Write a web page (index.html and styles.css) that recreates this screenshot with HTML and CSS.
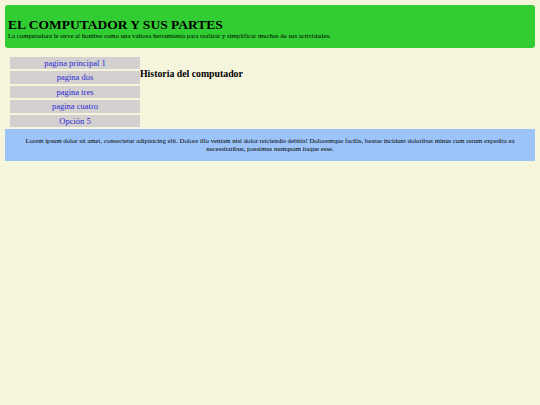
FILE: index.html
```html
<!DOCTYPE html>
<html lang="es">
<head>
<meta charset="utf-8">
<title>El computador y sus partes</title>
<link rel="stylesheet" href="styles.css">
</head>
<body>
<header class="header">
  <h1 class="title">EL COMPUTADOR Y SUS PARTES</h1>
  <p class="subtitle">La computadora le sirve al hombre como una valiosa herramienta para realizar y simplificar muchas de sus actividades.</p>
</header>
<div class="middle">
  <nav class="nav">
    <a class="nav-item" href="#">pagina principal 1</a>
    <a class="nav-item" href="#">pagina dos</a>
    <a class="nav-item" href="#">pagina tres</a>
    <a class="nav-item" href="#">pagina cuatro</a>
    <a class="nav-item" href="#">Opción 5</a>
  </nav>
  <h2 class="section-title">Historia del computador</h2>
</div>
<footer class="footer">
  <p class="footer-text">Lorem ipsum dolor sit amet, consectetur adipisicing elit. Dolore illo veniam nisi dolor reiciendis debitis! Doloremque facilis, beatae incidunt doloribus minus cum rerum expedita ea necessitatibus, possimus numquam itaque esse.</p>
</footer>
</body>
</html>
```
FILE: styles.css
```css
html, body {
  margin: 0;
  padding: 0;
}
body {
  background: #f5f5dc;
  padding: 5px;
  font-family: "Liberation Serif", "Times New Roman", serif;
  color: #000;
}
.header {
  background: #32cd32;
  border-radius: 3px;
  padding: 13px 3px 8px;
}
.title {
  margin: 0;
  font-size: 13.5px;
  line-height: 14px;
  font-weight: bold;
}
.subtitle {
  margin: 0;
  font-size: 6.75px;
  line-height: 8px;
}
.middle {
  display: flex;
  align-items: flex-start;
  margin-top: 9px;
}
.nav {
  display: flex;
  flex-direction: column;
  gap: 2px;
  width: 130px;
  margin-left: 5px;
}
.nav-item {
  display: block;
  height: 12.4px;
  line-height: 12.4px;
  background: #d4d0cf;
  color: #2a2ad6;
  text-decoration: none;
  text-align: center;
  font-size: 8.5px;
}
.section-title {
  margin: 10.5px 0 0;
  font-size: 9.8px;
  line-height: 12px;
  font-weight: bold;
}
.footer {
  margin-top: 2px;
  background: #9cc4f9;
  padding: 8px 20px;
}
.footer-text {
  margin: 0;
  text-align: center;
  font-size: 6.75px;
  line-height: 8px;
}
```
